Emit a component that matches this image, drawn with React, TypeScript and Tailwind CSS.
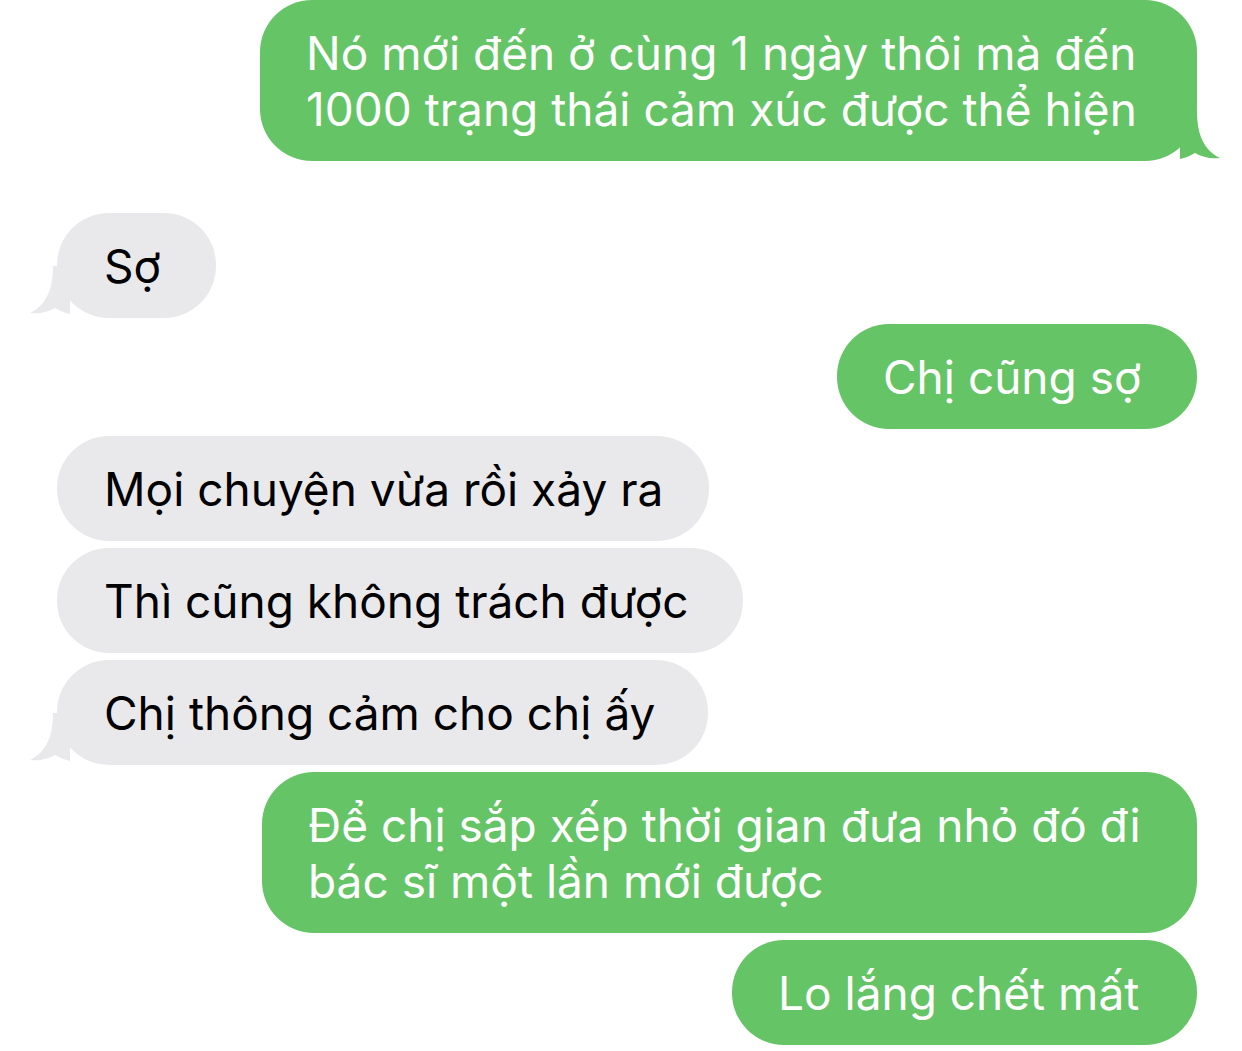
import React from "react";

type Msg = {
  text: string[];
  me: boolean;
  box: string;
  tail?: boolean;
};

// widths and top spacing measured off the screenshot
const messages: Msg[] = [
  {
    text: ["Nó mới đến ở cùng 1 ngày thôi mà đến", "1000 trạng thái cảm xúc được thể hiện"],
    me: true,
    box: "w-[937px]",
    tail: true,
  },
  { text: ["Sợ"], me: false, box: "w-[159px] mt-[52px]", tail: true },
  { text: ["Chị cũng sợ"], me: true, box: "w-[360px] mt-[6px]" },
  { text: ["Mọi chuyện vừa rồi xảy ra"], me: false, box: "w-[652px] mt-[7px]" },
  { text: ["Thì cũng không trách được"], me: false, box: "w-[686px] mt-[7px]" },
  { text: ["Chị thông cảm cho chị ấy"], me: false, box: "w-[651px] mt-[7px]", tail: true },
  {
    text: ["Để chị sắp xếp thời gian đưa nhỏ đó đi", "bác sĩ một lần mới được"],
    me: true,
    box: "w-[935px] mt-[7px]",
  },
  { text: ["Lo lắng chết mất"], me: true, box: "w-[465px] mt-[7px]" },
];

function Tail({ me }: { me: boolean }) {
  return (
    <svg
      viewBox="0 0 40 50"
      className={
        me
          ? "absolute right-[-23px] bottom-[0px] h-[50px] w-[40px]"
          : "absolute left-[-27px] bottom-[2px] h-[50px] w-[40px] -scale-x-100"
      }
    >
      <path
        d="M0 0 H17 C17 24 24 39 40 47 C30 48 22 46 15 42 C10 45 5 47 0 48 Z"
        fill={me ? "#65c466" : "#e9e9eb"}
      />
    </svg>
  );
}

export default function App() {
  return (
    <div className="flex h-[1051px] w-[1242px] flex-col overflow-hidden bg-white font-['Inter','Noto_Sans',sans-serif]">
      {messages.map((m, i) => (
        <div
          key={i}
          className={m.me ? "flex justify-end pr-[45px]" : "flex justify-start pl-[57px]"}
        >
          <div
            className={
              (m.me
                ? "relative rounded-[52px] bg-[#65c466] py-[24.5px] pl-[46px] text-[46px] leading-[56px] text-white "
                : "relative rounded-[52px] bg-[#e9e9eb] py-[24.5px] pl-[47px] text-[46px] leading-[56px] text-black ") + m.box
            }
          >
            {m.tail && <Tail me={m.me} />}
            <div className="relative whitespace-nowrap">
              {m.text.map((t, j) => (
                <div key={j}>{t}</div>
              ))}
            </div>
          </div>
        </div>
      ))}
    </div>
  );
}
